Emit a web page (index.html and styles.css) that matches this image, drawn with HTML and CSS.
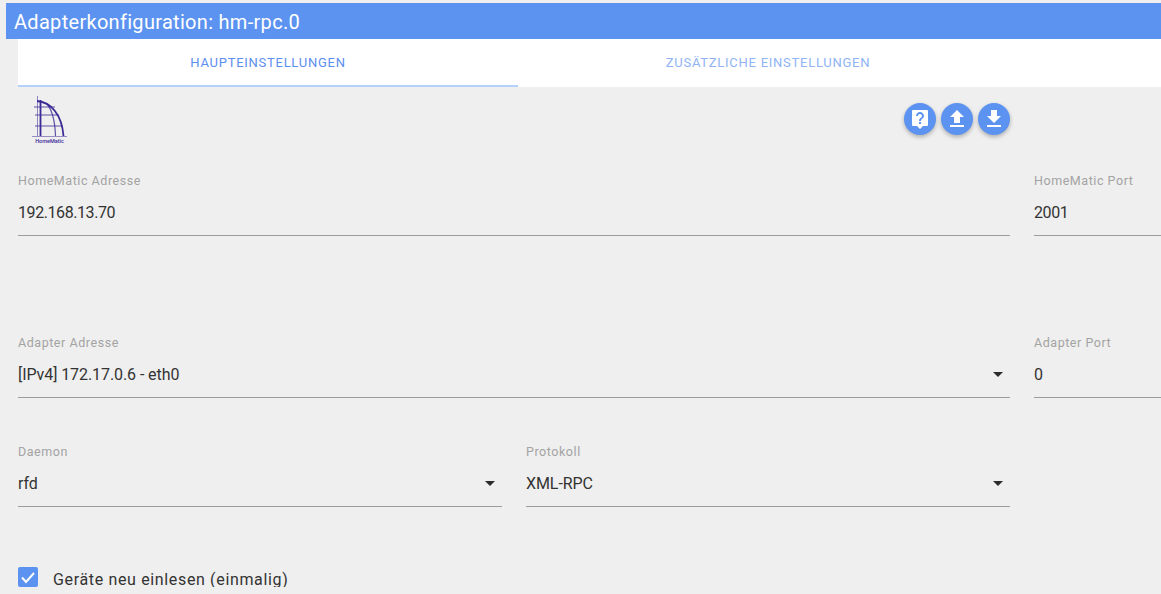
FILE: index.html
```html
<!DOCTYPE html>
<html lang="de">
<head>
<meta charset="utf-8">
<title>Adapterkonfiguration: hm-rpc.0</title>
<link rel="stylesheet" href="styles.css">
</head>
<body>
<header class="title">Adapterkonfiguration: hm-rpc.0</header>
<main class="content">
  <nav class="tabs">
    <div class="tab active">HAUPTEINSTELLUNGEN</div>
    <div class="tab">ZUSÄTZLICHE EINSTELLUNGEN</div>
  </nav>
  <div class="toolbar">
    <svg class="logo" viewBox="0 0 48 48" width="48" height="48" fill="none" stroke="#3c2a96">
      <path d="M11.500 1V41" stroke-width=".9" stroke-opacity=".6"/>
      <path d="M14.500 5V41" stroke-width="1.800"/>
      <path d="M11 6C25 7 36 20 37.500 41" stroke-width="1.800"/>
      <path d="M21 9C26 15 29 26 29.500 41" stroke-width="1.200" stroke-opacity=".8"/>
      <path d="M8 12H29M9 20H33M9 31H37" stroke-width="1" stroke-opacity=".8"/>
      <path d="M6 41.500H41" stroke-width="1" stroke-opacity=".5"/>
      <text x="23.500" y="47.500" class="logo-text" text-anchor="middle">HomeMatic</text>
    </svg>
    <div class="actions">
      <button class="fab" aria-label="Hilfe"><svg viewBox="0 0 24 24" width="24" height="24"><path fill="#fff" fill-rule="evenodd" d="M5 3h14a1 1 0 0 1 1 1v14a1 1 0 0 1-1 1h-4l-3 3-3-3H5a1 1 0 0 1-1-1V4a1 1 0 0 1 1-1Zm6 12v2h2v-2h-2Zm1-10c-2.200 0-4 1.800-4 4h2c0-1.100.9-2 2-2s2 .9 2 2c0 2-3 1.800-3 5h2c0-2.300 3-2.500 3-5 0-2.200-1.800-4-4-4Z"/></svg></button>
      <button class="fab" aria-label="Hochladen"><svg viewBox="0 0 24 24" width="24" height="24"><path fill="#fff" d="M9 16h6v-6h4l-7-7-7 7h4v6Zm-4 2h14v2H5v-2Z"/></svg></button>
      <button class="fab" aria-label="Herunterladen"><svg viewBox="0 0 24 24" width="24" height="24"><path fill="#fff" d="M19 9h-4V3H9v6H5l7 7 7-7ZM5 18v2h14v-2H5Z"/></svg></button>
    </div>
  </div>
  <div class="row row-top">
    <div class="field wide"><label>HomeMatic Adresse</label><div class="value num">192.168.13.70</div></div>
    <div class="field port"><label>HomeMatic Port</label><div class="value num">2001</div></div>
  </div>
  <div class="row row-adapter">
    <div class="field wide"><label>Adapter Adresse</label><div class="value select">[IPv4] 172.17.0.6 - eth0</div></div>
    <div class="field port"><label>Adapter Port</label><div class="value">0</div></div>
  </div>
  <div class="row row-daemon">
    <div class="split">
      <div class="field half"><label>Daemon</label><div class="value select">rfd</div></div>
      <div class="field half"><label>Protokoll</label><div class="value select">XML-RPC</div></div>
    </div>
  </div>
  <div class="check-row">
    <span class="checkbox"><svg viewBox="0 0 20 20" width="20" height="20"><path d="M4 10.500 8 15 16 6" fill="none" stroke="#fff" stroke-width="2"/></svg></span>
    <span class="check-label">Geräte neu einlesen (einmalig)</span>
  </div>
</main>
</body>
</html>
```

FILE: styles.css
```css
* { box-sizing: border-box; }
html, body { margin: 0; height: 100%; overflow: hidden; }
body {
  width: 1161px;
  height: 594px;
  padding: 3px 0 0 6px;
  background: #efefef;
  font-family: Roboto, "Noto Sans", sans-serif;
  color: #333333;
}
.title {
  height: 36px;
  padding-left: 8px;
  background: #5c93f0;
  color: #fff;
  font-size: 20px;
  line-height: 38px;
  letter-spacing: .3px;
  white-space: nowrap;
}
.content { padding-left: 12px; width: 1155px; overflow: hidden; }
.tabs { display: flex; height: 48px; background: #fff; width: 1143px; }
.tab {
  width: 500px;
  height: 48px;
  font-size: 13px;
  line-height: 48px;
  letter-spacing: .74px;
  text-align: center;
  color: #8fb3f5;
}
.tab.active {
  color: #5c8ef0;
  border-bottom: 2px solid #b5d0fb;
}
.toolbar { display: flex; width: 992px; height: 86px; padding-top: 8px; }
.logo { display: block; margin-left: 8px; }
.logo-text { font-size: 5.500px; fill: #3c2a96; stroke: none; font-weight: 500; }
.actions { display: flex; gap: 5px; margin-left: auto; padding-top: 8px; }
.fab {
  width: 32px;
  height: 32px;
  padding: 4px;
  border: 0;
  border-radius: 50%;
  background: #5c93f0;
  box-shadow: 0 2px 4px rgba(0,0,0,.28);
}
.fab svg { display: block; }
.row { display: flex; gap: 24px; }
.row-top { height: 162px; }
.row-adapter { height: 109px; }
.row-daemon { height: 123px; }
.field { height: 87px; }
.wide, .split { width: 992px; flex: none; }
.split { display: flex; gap: 24px; }
.half { width: 484px; }
.port { width: 200px; flex: none; }
.field label {
  display: block;
  height: 16px;
  font-size: 12.500px;
  line-height: 16px;
  letter-spacing: .55px;
  color: #a3a3a3;
}
.value {
  height: 39px;
  margin-top: 8px;
  padding-top: 6px;
  font-size: 16px;
  line-height: 20px;
  letter-spacing: -.08px;
  border-bottom: 1px solid #9c9c9c;
  white-space: nowrap;
}
.value.num { letter-spacing: -.42px; }
.select { position: relative; }
.select::after {
  content: "";
  position: absolute;
  right: 7px;
  top: 13px;
  border-left: 5px solid transparent;
  border-right: 5px solid transparent;
  border-top: 5px solid #2b2b2b;
}
.check-row { display: flex; align-items: center; height: 20px; }
.checkbox {
  width: 20px;
  height: 20px;
  border-radius: 2px;
  background: #5c93f0;
}
.checkbox svg { display: block; }
.check-label {
  margin-left: 15px;
  margin-top: 4px;
  font-size: 16px;
  letter-spacing: .65px;
  white-space: nowrap;
}
```
